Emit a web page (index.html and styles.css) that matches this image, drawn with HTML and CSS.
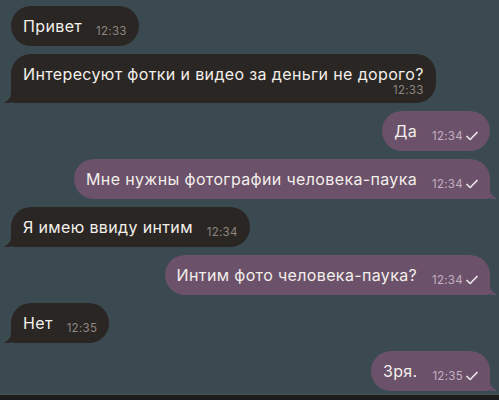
FILE: index.html
```html
<!DOCTYPE html>
<html lang="ru">
<head>
    <meta charset="UTF-8">
    <meta name="viewport" content="width=device-width, initial-scale=1.0">
    <title>Чат</title>
    <link rel="stylesheet" href="styles.css">
</head>
<body>
    <div class="chat">
        <div class="msg in">
            <div class="bubble">Привет <span class="time">12:33</span></div>
        </div>
        <div class="msg in">
            <div class="bubble tail two-line">Интересуют фотки и видео за деньги не дорого?<span class="time">12:33</span></div>
        </div>
        <div class="msg out">
            <div class="bubble">Да <span class="time">12:34<svg class="tick" viewBox="0 0 12 9"><path d="M1 5l3.2 3L11 1"/></svg></span></div>
        </div>
        <div class="msg out">
            <div class="bubble tail">Мне нужны фотографии человека-паука <span class="time">12:34<svg class="tick" viewBox="0 0 12 9"><path d="M1 5l3.2 3L11 1"/></svg></span></div>
        </div>
        <div class="msg in">
            <div class="bubble tail">Я имею ввиду интим <span class="time">12:34</span></div>
        </div>
        <div class="msg out">
            <div class="bubble tail">Интим фото человека-паука? <span class="time">12:34<svg class="tick" viewBox="0 0 12 9"><path d="M1 5l3.2 3L11 1"/></svg></span></div>
        </div>
        <div class="msg in">
            <div class="bubble tail">Нет <span class="time">12:35</span></div>
        </div>
        <div class="msg out">
            <div class="bubble tail">Зря. <span class="time">12:35<svg class="tick" viewBox="0 0 12 9"><path d="M1 5l3.2 3L11 1"/></svg></span></div>
        </div>
    </div>
    <div class="bottom-bar"></div>
</body>
</html>
```

FILE: styles.css
```css
body {
    margin: 0;
    height: 100vh;
    display: flex;
    flex-direction: column;
    background-color: #3b4a50;
    font-family: Inter, Roboto, "Noto Sans", sans-serif;
    overflow: hidden;
}
.chat {
    flex: 1;
    display: flex;
    flex-direction: column;
    gap: 8px;
    padding: 6px 9px 0 11px;
}
.msg {
    display: flex;
}
.msg.out {
    justify-content: flex-end;
}
.bubble {
    position: relative;
    padding: 9px 12px 9px 12px;
    border-radius: 20px;
    font-size: 16px;
    line-height: 22px;
    letter-spacing: 0.36px;
    color: #f3efeb;
    white-space: nowrap;
}
.in .bubble {
    background-color: #2a2623;
}
.out .bubble {
    background-color: #6b5169;
}
.time {
    display: inline-block;
    margin-left: 9px;
    font-size: 11.5px;
    line-height: 12px;
    letter-spacing: 0.3px;
    color: #8d8782;
    vertical-align: -3px;
}
.out .time {
    margin-left: 10px;
    color: #c2b1c0;
}
.tick {
    width: 12px;
    height: 10px;
    margin-left: 3px;
    vertical-align: -1px;
    fill: none;
    stroke: #ece6ea;
    stroke-width: 1.7;
    stroke-linecap: round;
    stroke-linejoin: round;
}
.two-line {
    padding-bottom: 7px;
}
.two-line .time {
    display: block;
    text-align: right;
    margin-top: -1px;
}

/* хвостики пузырей */
.tail::before,
.tail::after {
    content: "";
    position: absolute;
    bottom: 0;
    height: 18px;
}
.in .tail {
    border-bottom-left-radius: 4px;
}
.in .tail::before {
    left: -6px;
    width: 16px;
    background-color: #2a2623;
    border-bottom-right-radius: 14px 12px;
}
.in .tail::after {
    left: -12px;
    width: 12px;
    background-color: #3b4a50;
    border-bottom-right-radius: 10px;
}
.out .tail {
    border-bottom-right-radius: 4px;
}
.out .tail::before {
    right: -6px;
    width: 16px;
    background-color: #6b5169;
    border-bottom-left-radius: 14px 12px;
}
.out .tail::after {
    right: -12px;
    width: 12px;
    background-color: #3b4a50;
    border-bottom-left-radius: 10px;
}
.bottom-bar {
    height: 5px;
    background-color: #1c1c1c;
    border-top: 1px solid #4b5256;
}
```
